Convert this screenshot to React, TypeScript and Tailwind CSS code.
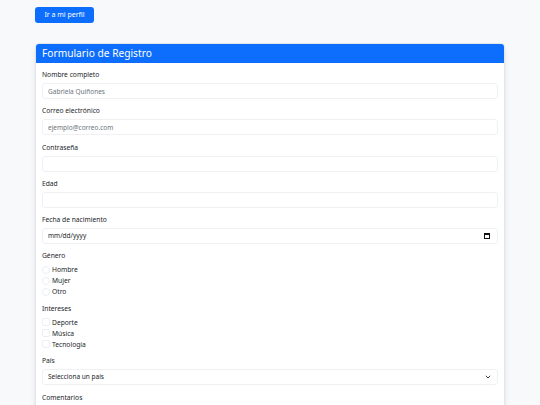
import React from 'react';

const font = { fontFamily: '"Noto Sans", "Open Sans", sans-serif' };

const Label: React.FC<{ children: React.ReactNode }> = ({ children }) => (
  <div className="h-[11px] leading-[11px] text-[6.7px] text-[#212529] mb-[3px]">{children}</div>
);

const inputCls =
  'block w-full h-4 rounded-[3px] border border-[#eef0f2] bg-white px-[5px] text-[6.5px] text-[#212529] placeholder:text-[#6c757d] outline-none';

const Field: React.FC<{ label: string; children: React.ReactNode }> = ({ label, children }) => (
  <div className="mb-[6.3px]">
    <Label>{label}</Label>
    {children}
  </div>
);

const Option: React.FC<{ label: string; round?: boolean }> = ({ label, round }) => (
  <div className="flex items-center h-[11px] gap-[2px]">
    <span
      className={`w-2 h-2 border border-[#eceef1] bg-white ${round ? 'rounded-full' : 'rounded-[2px]'}`}
    />
    <span className="text-[6.7px] leading-[11px] text-[#212529]">{label}</span>
  </div>
);

export default function App() {
  return (
    <div className="min-h-screen bg-[#f8f9fa] pl-[35px] pt-[7px]" style={font}>
      <button className="block h-4 w-[59px] rounded-[3px] bg-[#0d6efd] text-white text-[7px] leading-4">
        Ir a mi perfil
      </button>

      <div className="mt-5 w-[470px] rounded-[4px] border border-[#e3e6ea] bg-white shadow-md overflow-hidden">
        <div className="h-[19px] bg-[#0d6efd] px-[6px] text-white text-[10.2px] leading-[19px]">
          Formulario de Registro
        </div>
        <div className="px-[6px] pt-[6px]">
          <Field label="Nombre completo">
            <input className={inputCls} placeholder="Gabriela Quiñones" />
          </Field>
          <Field label="Correo electrónico">
            <input className={inputCls} placeholder="ejemplo@correo.com" />
          </Field>
          <Field label="Contraseña">
            <input className={inputCls} type="password" />
          </Field>
          <Field label="Edad">
            <input className={inputCls} type="number" />
          </Field>
          <Field label="Fecha de nacimiento">
            <div className={`${inputCls} flex items-center justify-between`}>
              <span className="leading-none">mm/dd/yyyy</span>
              <span className="w-[6px] h-[6px] border border-t-2 border-[#111] mr-[2px]" />
            </div>
          </Field>
          <div className="mb-[5.5px]">
            <Label>Género</Label>
            <Option round label="Hombre" />
            <Option round label="Mujer" />
            <Option round label="Otro" />
          </div>
          <div className="mb-[5.5px]">
            <Label>Intereses</Label>
            <Option label="Deporte" />
            <Option label="Música" />
            <Option label="Tecnología" />
          </div>
          <Field label="País">
            <div className={`${inputCls} flex items-center justify-between`}>
              <span className="leading-none">Selecciona un país</span>
              <svg width="6" height="4" viewBox="0 0 6 4" className="mr-[1px]">
                <path d="M0.8 0.8 L3 3 L5.2 0.8" fill="none" stroke="#343a40" strokeWidth="1" />
              </svg>
            </div>
          </Field>
          <Field label="Comentarios">
            <textarea className={`${inputCls} h-12`} />
          </Field>
        </div>
      </div>
    </div>
  );
}
